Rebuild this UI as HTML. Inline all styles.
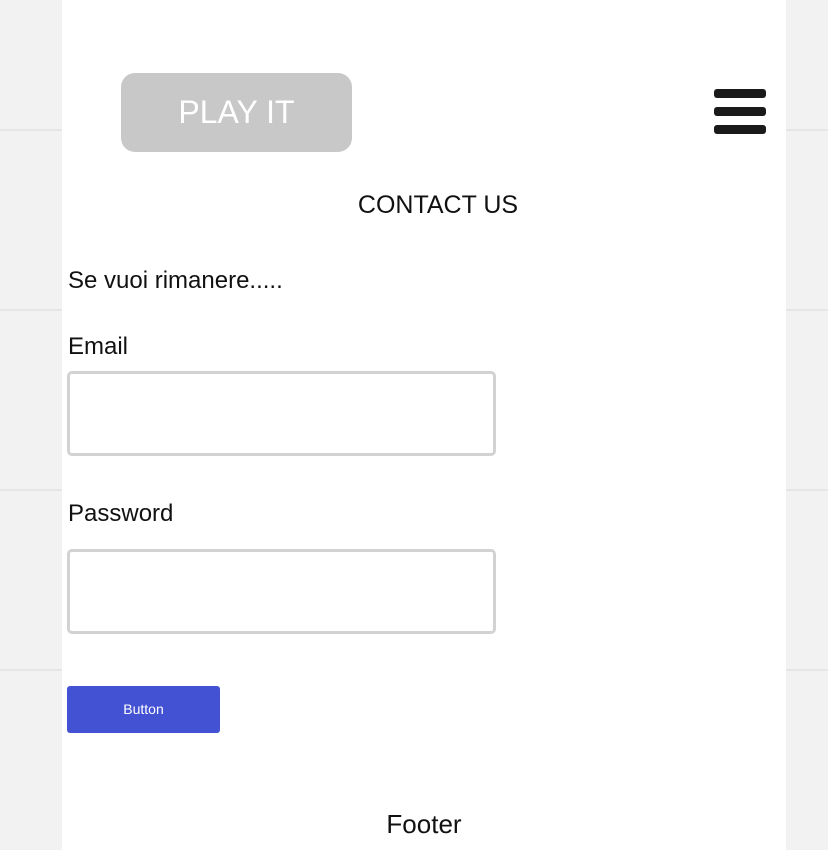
<!DOCTYPE html>
<html><head><style>
body{margin:0;width:828px;height:850px;overflow:hidden;background:#f2f2f2;position:relative;font-family:"Liberation Sans",sans-serif;}
.line{position:absolute;left:0;width:828px;height:2px;background:#e6e6e6;}
.panel{position:absolute;left:62px;top:0;width:724px;height:850px;background:#fff;}
.play{position:absolute;left:121px;top:73px;width:231px;height:79px;background:#c8c8c8;border-radius:14px;color:#fff;font-size:32px;text-align:center;line-height:79px;}
.bar{position:absolute;left:714px;width:52px;height:9px;background:#1a1a1a;border-radius:3px;}
.t{position:absolute;color:#111;font-size:24px;}
.inp{position:absolute;left:67px;width:423px;height:79px;border:3px solid #d2d2d2;border-radius:5px;background:#fff;}
.btn{position:absolute;left:67px;top:686px;width:153px;height:47px;background:#4351d3;border-radius:3px;color:#fff;font-size:14px;text-align:center;line-height:47px;}
</style></head><body>
<div class="line" style="top:129px"></div>
<div class="line" style="top:309px"></div>
<div class="line" style="top:489px"></div>
<div class="line" style="top:669px"></div>
<div class="panel"></div>
<div class="play">PLAY IT</div>
<div class="bar" style="top:89px"></div>
<div class="bar" style="top:107px"></div>
<div class="bar" style="top:125px"></div>
<div class="t" style="left:0;width:876px;text-align:center;top:191px;font-size:25px">CONTACT US</div>
<div class="t" style="left:68px;top:267px">Se vuoi rimanere.....</div>
<div class="t" style="left:68px;top:333px">Email</div>
<div class="inp" style="top:371px"></div>
<div class="t" style="left:68px;top:500px">Password</div>
<div class="inp" style="top:549px"></div>
<div class="btn">Button</div>
<div class="t" style="left:0;width:848px;text-align:center;top:809px;font-size:26px">Footer</div>
</body></html>
